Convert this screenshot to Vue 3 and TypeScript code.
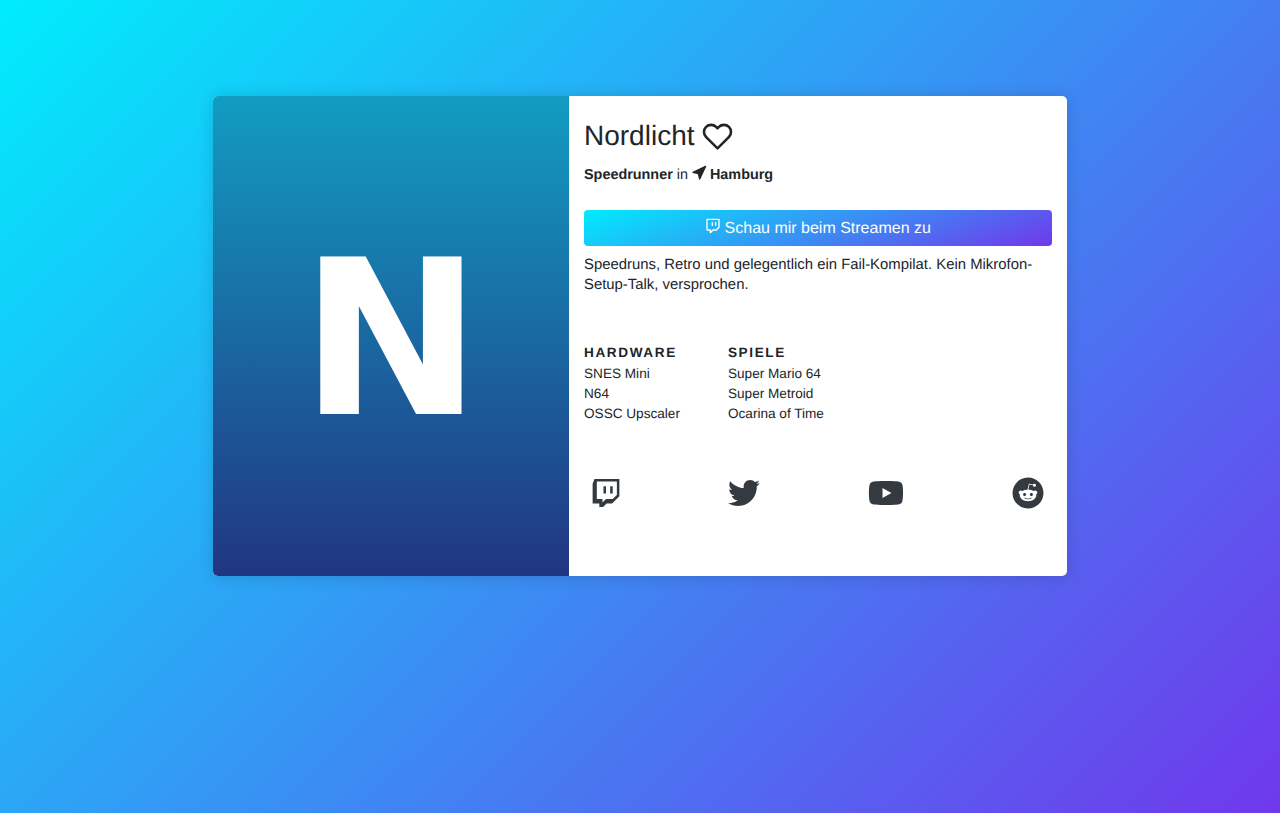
<script setup lang="ts">
interface Column { title: string; items: string[] }
const columns: Column[] = [
  { title: 'Hardware', items: ['SNES Mini', 'N64', 'OSSC Upscaler'] },
  { title: 'Spiele', items: ['Super Mario 64', 'Super Metroid', 'Ocarina of Time'] },
]
</script>

<template>
  <div class="page">
    <div class="card">
      <div class="poster"><span class="letter">N</span></div>
      <div class="body">
        <h3 class="name">
          Nordlicht
          <svg class="heart" viewBox="0 0 24 24" fill="none" stroke="currentColor" stroke-width="2" stroke-linecap="round" stroke-linejoin="round"><path d="M20.84 4.61a5.5 5.5 0 0 0-7.78 0L12 5.67l-1.06-1.06a5.5 5.5 0 0 0-7.78 7.78l1.06 1.06L12 21.23l7.78-7.78 1.06-1.06a5.5 5.5 0 0 0 0-7.78z"/></svg>
        </h3>
        <p class="role">
          <b>Speedrunner</b> in
          <svg class="nav" viewBox="0 0 24 24" fill="currentColor" stroke="currentColor" stroke-width="2" stroke-linecap="round" stroke-linejoin="round"><polygon points="3 11 22 2 13 21 11 13 3 11"/></svg>
          <b>Hamburg</b>
        </p>
        <button class="stream" type="button">
          <svg class="tw" viewBox="0 0 24 24" fill="none" stroke="currentColor" stroke-width="2" stroke-linecap="round" stroke-linejoin="round"><path d="M21 2H3v16h5v4l4-4h5l4-4V2zm-10 9V7m5 4V7"/></svg>
          Schau mir beim Streamen zu
        </button>
        <p class="desc">Speedruns, Retro und gelegentlich ein Fail-Kompilat. Kein Mikrofon-Setup-Talk, versprochen.</p>
        <div class="cols">
          <div v-for="c in columns" :key="c.title" class="col">
            <h6>{{ c.title }}</h6>
            <div v-for="i in c.items" :key="i" class="item">{{ i }}</div>
          </div>
        </div>
        <div class="social">
          <a class="soc"><svg viewBox="0 0 448 512" fill="currentColor"><path d="M40.1 32L10 108.9v314.3h107V480h60.2l56.8-56.8h87l117-117V32H40.1zm357.8 254.1L331 353H224l-56.8 56.8V353H76.9V72.1h321v214zM331 149v116.9h-40.1V149H331zm-107 0v116.9h-40.1V149H224z"/></svg></a>
          <a class="soc"><svg viewBox="0 0 512 512" fill="currentColor"><path d="M459.37 151.716c.325 4.548.325 9.097.325 13.645 0 138.72-105.583 298.558-298.558 298.558-59.452 0-114.68-17.219-161.137-47.106 8.447.974 16.568 1.299 25.34 1.299 49.055 0 94.213-16.568 130.274-44.832-46.132-.975-84.792-31.188-98.112-72.772 6.498.974 12.995 1.624 19.818 1.624 9.421 0 18.843-1.3 27.614-3.573-48.081-9.747-84.143-51.98-84.143-102.985v-1.299c13.969 7.797 30.214 12.67 47.431 13.319-28.264-18.843-46.781-51.005-46.781-87.391 0-19.492 5.197-37.36 14.294-52.954 51.655 63.675 129.3 105.258 216.365 109.807-1.624-7.797-2.599-15.918-2.599-24.04 0-57.828 46.782-104.934 104.934-104.934 30.213 0 57.502 12.67 76.67 33.137 23.715-4.548 46.456-13.32 66.599-25.34-7.798 24.366-24.366 44.833-46.132 57.827 21.117-2.273 41.584-8.122 60.426-16.243-14.292 20.791-32.161 39.308-52.628 54.253z"/></svg></a>
          <a class="soc"><svg viewBox="0 0 576 512" fill="currentColor"><path d="M549.655 124.083c-6.281-23.65-24.787-42.276-48.284-48.597C458.781 64 288 64 288 64S117.22 64 74.629 75.486c-23.497 6.322-42.003 24.947-48.284 48.597-11.412 42.867-11.412 132.305-11.412 132.305s0 89.438 11.412 132.305c6.281 23.65 24.787 41.5 48.284 47.821C117.22 448 288 448 288 448s170.78 0 213.371-11.486c23.497-6.321 42.003-24.171 48.284-47.821 11.412-42.867 11.412-132.305 11.412-132.305s0-89.438-11.412-132.305zm-317.51 213.508V175.185l142.739 81.205-142.739 81.201z"/></svg></a>
          <a class="soc"><svg viewBox="0 0 512 512" fill="currentColor"><path d="M201.5 305.5c-13.8 0-24.9-11.1-24.9-24.6 0-13.8 11.1-24.9 24.9-24.9 13.6 0 24.6 11.1 24.6 24.9 0 13.6-11.1 24.6-24.6 24.6zM504 256c0 137-111 248-248 248S8 393 8 256 119 8 256 8s248 111 248 248zm-132.3-41.2c-9.4 0-17.7 3.9-23.8 10-22.4-15.5-52.6-25.5-86.1-26.6l17.4-78.3 55.4 12.5c0 13.6 11.1 24.6 24.6 24.6 13.8 0 24.9-11.3 24.9-24.9s-11.1-24.9-24.9-24.9c-9.7 0-18 5.8-22.1 13.8l-61.2-13.6c-3-.8-6.1 1.4-6.9 4.4l-19.1 86.4c-33.2 1.4-63.1 11.3-85.5 26.8-6.1-6.4-14.7-10.2-24.1-10.2-34.9 0-46.3 46.9-14.4 62.8-1.1 5-1.7 10.2-1.7 15.5 0 52.6 59.2 95.2 132 95.2 73.1 0 132.3-42.6 132.3-95.2 0-5.3-.6-10.8-1.9-15.8 31.3-16 19.8-62.5-14.9-62.5zM302.8 331c-18.2 18.2-76.1 17.9-93.6 0-2.2-2.2-6.1-2.2-8.3 0-2.5 2.5-2.5 6.4 0 8.6 22.8 22.8 87.3 22.8 110.2 0 2.5-2.2 2.5-6.1 0-8.6-2.2-2.2-6.1-2.2-8.3 0zm7.7-75c-13.6 0-24.6 11.1-24.6 24.9 0 13.6 11.1 24.6 24.6 24.6 13.8 0 24.9-11.1 24.9-24.6 0-13.8-11-24.9-24.9-24.9z"/></svg></a>
        </div>
      </div>
    </div>
  </div>
</template>

<style scoped>
.page {
  height: 813px;
  box-sizing: border-box;
  padding-top: 96px;
  background: linear-gradient(135deg, #00ecfc, #7038ec);
  font-family: "Liberation Sans", Arial, sans-serif;
  color: #212529;
  text-rendering: geometricPrecision;
}
.card {
  width: 854px;
  height: 480px;
  margin: 0 auto;
  display: flex;
  border-radius: 5px;
  overflow: hidden;
  background: #fff;
  box-shadow: 0 1px 16px rgba(0, 0, 0, 0.15);
}
.poster {
  width: 356px;
  flex: none;
  box-sizing: border-box;
  padding-top: 7px;
  display: flex;
  align-items: center;
  justify-content: center;
  background: linear-gradient(180deg, #129cc2, #213583);
}
.letter {
  font-family: "DejaVu Sans", sans-serif;
  font-size: 216px;
  line-height: 1;
  font-weight: 700;
  color: #fff;
  filter: blur(0.5px);
}
.body {
  flex: 1;
  padding: 0 15px;
  display: flex;
  flex-direction: column;
}
.name {
  margin: 22px 0 0;
  font-size: 28px;
  font-weight: 400;
  line-height: 36px;
  display: flex;
  align-items: center;
  gap: 8px;
}
.heart { width: 31px; height: 31px; color: #212529; }
.role {
  margin: 11px 0 0;
  font-size: 14.4px;
  line-height: 20px;
}
.nav { width: 16px; height: 16px; vertical-align: -2px; margin: 0 3px 0 -1px; }
.stream {
  margin-top: 25px;
  height: 36px;
  border: 0;
  border-radius: 4px;
  color: #fff;
  font: 16px "Liberation Sans", Arial, sans-serif;
  text-rendering: geometricPrecision;
  background: linear-gradient(160deg, #00ecfc, #7038ec);
  padding: 0;
}
.tw { width: 16px; height: 16px; vertical-align: -1px; margin-right: -1px; }
.desc {
  margin: 9px 0 0;
  font-size: 14.88px;
  line-height: 20px;
}
.cols {
  margin-top: 49px;
  display: flex;
  gap: 48px;
}
h6 {
  margin: 0 0 3px;
  font-size: 13.6px;
  line-height: 17px;
  font-weight: 700;
  letter-spacing: 1.6px;
  text-transform: uppercase;
}
.item {
  font-size: 13.6px;
  line-height: 20px;
}
.social {
  margin-top: 53px;
  display: flex;
  justify-content: space-between;
}
.soc {
  display: flex;
  padding: 0 7.5px;
  height: 32px;
  color: #343a40;
}
.soc svg { height: 32px; width: auto; }
</style>

<style>
html, body { background: #fff; }
</style>
